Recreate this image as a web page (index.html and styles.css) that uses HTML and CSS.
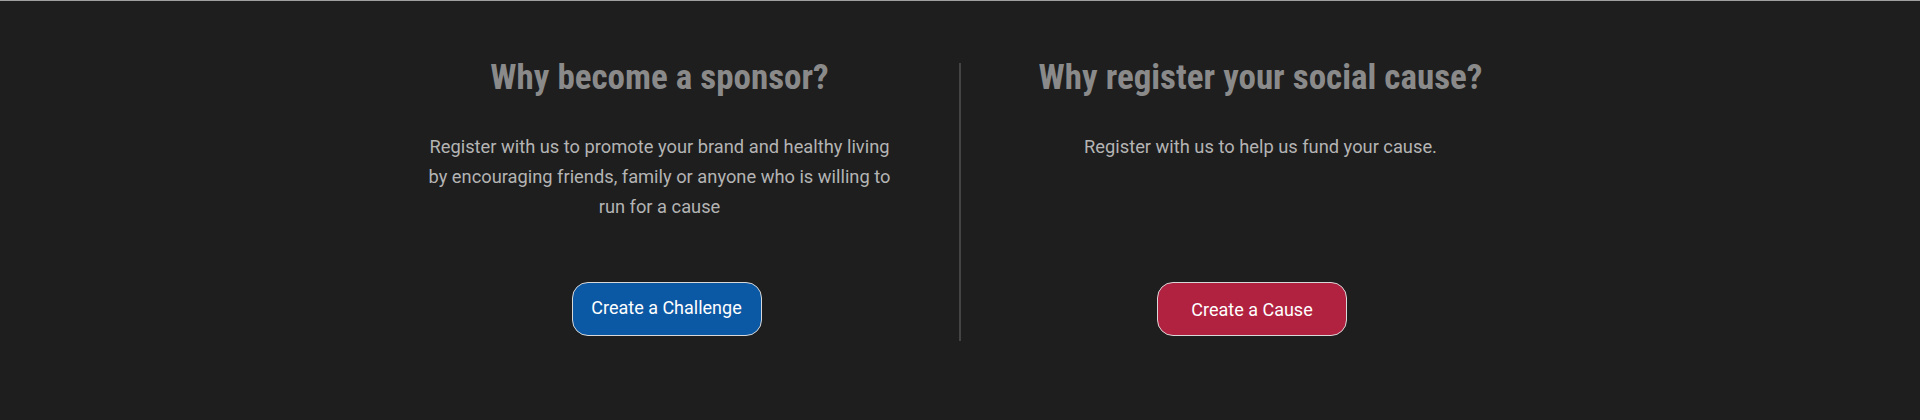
FILE: index.html
```html
<!DOCTYPE html>
<html lang="en">
<head>
<meta charset="utf-8">
<title>Sponsor and Cause</title>
<link rel="stylesheet" href="styles.css">
</head>
<body>
<section class="why">
  <div class="why-grid">
    <div class="why-col why-col--left">
      <h2 class="why-title">Why become a sponsor?</h2>
      <p class="why-text">Register with us to promote your brand and healthy living by encouraging friends, family or anyone who is willing to run for a cause</p>
      <a class="why-btn why-btn--blue" href="#">Create a Challenge</a>
    </div>
    <div class="why-divider"></div>
    <div class="why-col why-col--right">
      <h2 class="why-title">Why register your social cause?</h2>
      <p class="why-text">Register with us to help us fund your cause.</p>
      <a class="why-btn why-btn--red" href="#">Create a Cause</a>
    </div>
  </div>
</section>
</body>
</html>
```
FILE: styles.css
```css
html, body {
  margin: 0;
  padding: 0;
}
body {
  background: #1e1e1e;
  font-family: Roboto, "Noto Sans", sans-serif;
  height: 420px;
  overflow: hidden;
}
.why {
  border-top: 1px solid #a0a0a0;
  background: #1e1e1e;
  height: 419px;
  box-sizing: border-box;
  padding-top: 56px;
}
.why-grid {
  display: grid;
  grid-template-columns: 599px 2px 599px;
  margin-left: 360px;
}
.why-col {
  display: flex;
  flex-direction: column;
  align-items: center;
  text-align: center;
}
.why-divider {
  background: #444444;
  width: 2px;
  height: 278px;
  margin-top: 6px;
}
.why-title {
  margin: 0;
  font-family: "Roboto Condensed", "Liberation Sans Narrow", Roboto, sans-serif;
  font-stretch: condensed;
  font-weight: 700;
  font-size: 35px;
  line-height: 42px;
  color: #8a8a8a;
}
.why-text {
  margin: 33px 0 0;
  max-width: 472px;
  font-size: 18.3px;
  line-height: 30px;
  color: #b4b4b4;
}
.why-btn {
  margin-top: auto;
  margin-bottom: 5px;
  box-sizing: border-box;
  width: 190px;
  height: 54px;
  display: flex;
  align-items: center;
  justify-content: center;
  border: 1px solid #d8d8d8;
  border-radius: 16px;
  color: #ffffff;
  text-decoration: none;
  font-size: 18px;
}
.why-btn--blue {
  background: #0b58a4;
  margin-left: 14px;
  padding-bottom: 4px;
}
.why-btn--red {
  background: #b12241;
  margin-right: 17px;
  padding-top: 1px;
}
```
